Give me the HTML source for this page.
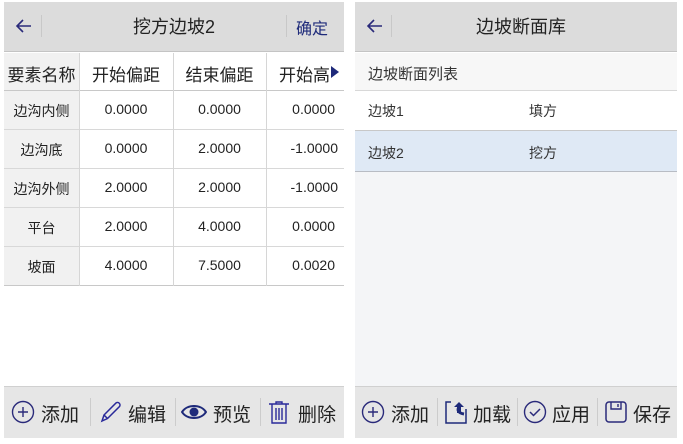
<!DOCTYPE html>
<html><head><meta charset="utf-8"><style>
*{margin:0;padding:0;box-sizing:border-box}
body{width:683px;height:444px;background:#fff;position:relative;overflow:hidden;font-family:"Liberation Sans","Noto Sans CJK SC",sans-serif;color:#222}
.a{position:absolute}
.hdr{background:#dcdcdc;border-bottom:1px solid #c4c4c4}
.t{position:absolute;white-space:nowrap}
.hl{position:absolute;background:#c8c8c8;height:1px}
.vl{position:absolute;background:#d6d6d6;width:1px}
.bar{background:#e6e6e6;border-top:1px solid #d0d0d0}
.c{position:absolute;text-align:center;font-size:14px}
.bt{position:absolute;white-space:nowrap;font-size:19px;top:400px}
</style></head><body>
<!-- left panel -->
<div class="a hdr" style="left:4px;top:2px;width:340px;height:50px"></div>
<svg class="a" style="left:14px;top:16px" width="20" height="20" viewBox="0 0 20 20"><path d="M17 10H3M9 4L3 10l6 6" fill="none" stroke="#2a2a7a" stroke-width="1.6"/></svg>
<div class="vl" style="left:41px;top:15px;height:22px;background:#c8c8c8"></div>
<div class="t" style="left:4px;width:340px;top:13px;text-align:center;font-size:18px">挖方边坡2</div>
<div class="vl" style="left:286px;top:15px;height:22px;background:#c8c8c8"></div>
<div class="t" style="left:296px;top:15px;font-size:16px;color:#1e2a7a">确定</div>

<div class="a" style="left:4px;top:53px;width:75px;height:233px;background:#f1f1f1"></div>
<div class="hl" style="left:4px;width:340px;top:90px"></div>
<div class="hl" style="left:4px;width:340px;top:129px;background:#d8d8d8"></div>
<div class="hl" style="left:4px;width:340px;top:168px;background:#d8d8d8"></div>
<div class="hl" style="left:4px;width:340px;top:207px;background:#d8d8d8"></div>
<div class="hl" style="left:4px;width:340px;top:246px;background:#d8d8d8"></div>
<div class="hl" style="left:4px;width:340px;top:285px"></div>
<div class="vl" style="left:79px;top:53px;height:233px"></div>
<div class="vl" style="left:173px;top:53px;height:233px"></div>
<div class="vl" style="left:266px;top:53px;height:233px"></div>

<div class="c" style="left:4px;width:75px;top:61px;font-size:17px">要素名称</div>
<div class="c" style="left:79px;width:94px;top:61px;font-size:17px">开始偏距</div>
<div class="c" style="left:173px;width:93px;top:61px;font-size:17px">结束偏距</div>
<div class="t" style="left:279px;top:61px;font-size:17px">开始高</div>
<svg class="a" style="left:330px;top:66px" width="10" height="12"><path d="M1 0L9 6L1 12Z" fill="#1e2a7a"/></svg>

<div class="c" style="left:4px;width:75px;top:101px">边沟内侧</div>
<div class="c" style="left:79px;width:94px;top:101px">0.0000</div>
<div class="c" style="left:173px;width:93px;top:101px">0.0000</div>
<div class="c" style="left:266px;width:78px;top:101px;text-align:right;padding-right:9px">0.0000</div>

<div class="c" style="left:4px;width:75px;top:140px">边沟底</div>
<div class="c" style="left:79px;width:94px;top:140px">0.0000</div>
<div class="c" style="left:173px;width:93px;top:140px">2.0000</div>
<div class="c" style="left:266px;width:78px;top:140px;text-align:right;padding-right:6px">-1.0000</div>

<div class="c" style="left:4px;width:75px;top:179px">边沟外侧</div>
<div class="c" style="left:79px;width:94px;top:179px">2.0000</div>
<div class="c" style="left:173px;width:93px;top:179px">2.0000</div>
<div class="c" style="left:266px;width:78px;top:179px;text-align:right;padding-right:6px">-1.0000</div>

<div class="c" style="left:4px;width:75px;top:218px">平台</div>
<div class="c" style="left:79px;width:94px;top:218px">2.0000</div>
<div class="c" style="left:173px;width:93px;top:218px">4.0000</div>
<div class="c" style="left:266px;width:78px;top:218px;text-align:right;padding-right:9px">0.0000</div>

<div class="c" style="left:4px;width:75px;top:257px">坡面</div>
<div class="c" style="left:79px;width:94px;top:257px">4.0000</div>
<div class="c" style="left:173px;width:93px;top:257px">7.5000</div>
<div class="c" style="left:266px;width:78px;top:257px;text-align:right;padding-right:9px">0.0020</div>

<div class="a bar" style="left:4px;top:386px;width:340px;height:52px"></div>
<svg class="a" style="left:11px;top:400px" width="24" height="24"><circle cx="12" cy="12" r="10.5" fill="none" stroke="#2a2a7a" stroke-width="1.4"/><path d="M12 7v10M7 12h10" stroke="#2a2a7a" stroke-width="1.4"/></svg>
<div class="bt" style="left:41px">添加</div>
<div class="vl" style="left:90px;top:398px;height:28px;background:#ccc"></div>
<svg class="a" style="left:97px;top:399px" width="26" height="26"><path d="M5 22l2-6L19 4a2.5 2.5 0 0 1 3.5 3.5L10.5 19.5Z M7 16l3.5 3.5" fill="none" stroke="#2a2a9a" stroke-width="1.5"/></svg>
<div class="bt" style="left:128px">编辑</div>
<div class="vl" style="left:175px;top:398px;height:28px;background:#ccc"></div>
<svg class="a" style="left:181px;top:402px" width="26" height="20"><path d="M1 10C6 2 20 2 25 10C20 18 6 18 1 10Z" fill="none" stroke="#1e2a7a" stroke-width="2"/><circle cx="13" cy="10" r="4.5" fill="#1e2a7a"/></svg>
<div class="bt" style="left:213px">预览</div>
<div class="vl" style="left:260px;top:398px;height:28px;background:#ccc"></div>
<svg class="a" style="left:267px;top:400px" width="24" height="25"><path d="M2 4h20M5 4v19h14V4M9 8v12M12 8v12M15 8v12M9 4V2h6v2" fill="none" stroke="#2a2a9a" stroke-width="1.4"/></svg>
<div class="bt" style="left:298px">删除</div>

<!-- right panel -->
<div class="a hdr" style="left:355px;top:2px;width:322px;height:50px"></div>
<svg class="a" style="left:365px;top:16px" width="20" height="20" viewBox="0 0 20 20"><path d="M17 10H3M9 4L3 10l6 6" fill="none" stroke="#2a2a7a" stroke-width="1.6"/></svg>
<div class="vl" style="left:391px;top:15px;height:22px;background:#c8c8c8"></div>
<div class="t" style="left:355px;width:322px;top:13px;text-align:center;font-size:18px;padding-left:10px">边坡断面库</div>
<div class="a" style="left:355px;top:53px;width:322px;height:37px;background:#f7f7f7"></div>
<div class="t" style="left:368px;top:63px;font-size:15px;color:#333">边坡断面列表</div>
<div class="hl" style="left:355px;width:322px;top:90px;background:#d8d8d8"></div>
<div class="t" style="left:368px;top:101px;font-size:14px;color:#333">边坡1</div>
<div class="t" style="left:529px;top:101px;font-size:14px;color:#333">填方</div>
<div class="hl" style="left:355px;width:322px;top:130px"></div>
<div class="a" style="left:355px;top:131px;width:322px;height:40px;background:#dfe9f5"></div>
<div class="t" style="left:368px;top:143px;font-size:14px;color:#333">边坡2</div>
<div class="t" style="left:529px;top:143px;font-size:14px;color:#333">挖方</div>
<div class="hl" style="left:355px;width:322px;top:171px;background:#b8bcc4"></div>
<div class="a" style="left:355px;top:172px;width:322px;height:214px;background:#f4f5f7"></div>

<div class="a bar" style="left:355px;top:386px;width:322px;height:52px"></div>
<svg class="a" style="left:361px;top:400px" width="24" height="24"><circle cx="12" cy="12" r="10.5" fill="none" stroke="#2a2a7a" stroke-width="1.4"/><path d="M12 7v10M7 12h10" stroke="#2a2a7a" stroke-width="1.4"/></svg>
<div class="bt" style="left:391px">添加</div>
<div class="vl" style="left:437px;top:398px;height:28px;background:#ccc"></div>
<svg class="a" style="left:443px;top:399px" width="26" height="26"><path d="M8 3H3v21h20V10" fill="none" stroke="#1e2a7a" stroke-width="1.5"/><path d="M11 8l5-5 5 5h-3v6h-4V8Z" fill="#1e2a7a"/><path d="M16 8c-2 3-1 6 5 7" fill="none" stroke="#1e2a7a" stroke-width="3"/></svg>
<div class="bt" style="left:473px">加载</div>
<div class="vl" style="left:517px;top:398px;height:28px;background:#ccc"></div>
<svg class="a" style="left:523px;top:400px" width="24" height="24"><circle cx="12" cy="12" r="10.5" fill="none" stroke="#2a2a7a" stroke-width="1.4"/><path d="M7 12l3.5 3.5L17 9" fill="none" stroke="#2a2a7a" stroke-width="1.5"/></svg>
<div class="bt" style="left:552px">应用</div>
<div class="vl" style="left:597px;top:398px;height:28px;background:#ccc"></div>
<svg class="a" style="left:604px;top:400px" width="24" height="24"><rect x="2" y="2" width="20" height="20" rx="3" fill="none" stroke="#2a2a7a" stroke-width="1.5"/><path d="M7 2v7h10V2M14 4v3" fill="none" stroke="#2a2a7a" stroke-width="1.4"/></svg>
<div class="bt" style="left:633px">保存</div>
</body></html>
